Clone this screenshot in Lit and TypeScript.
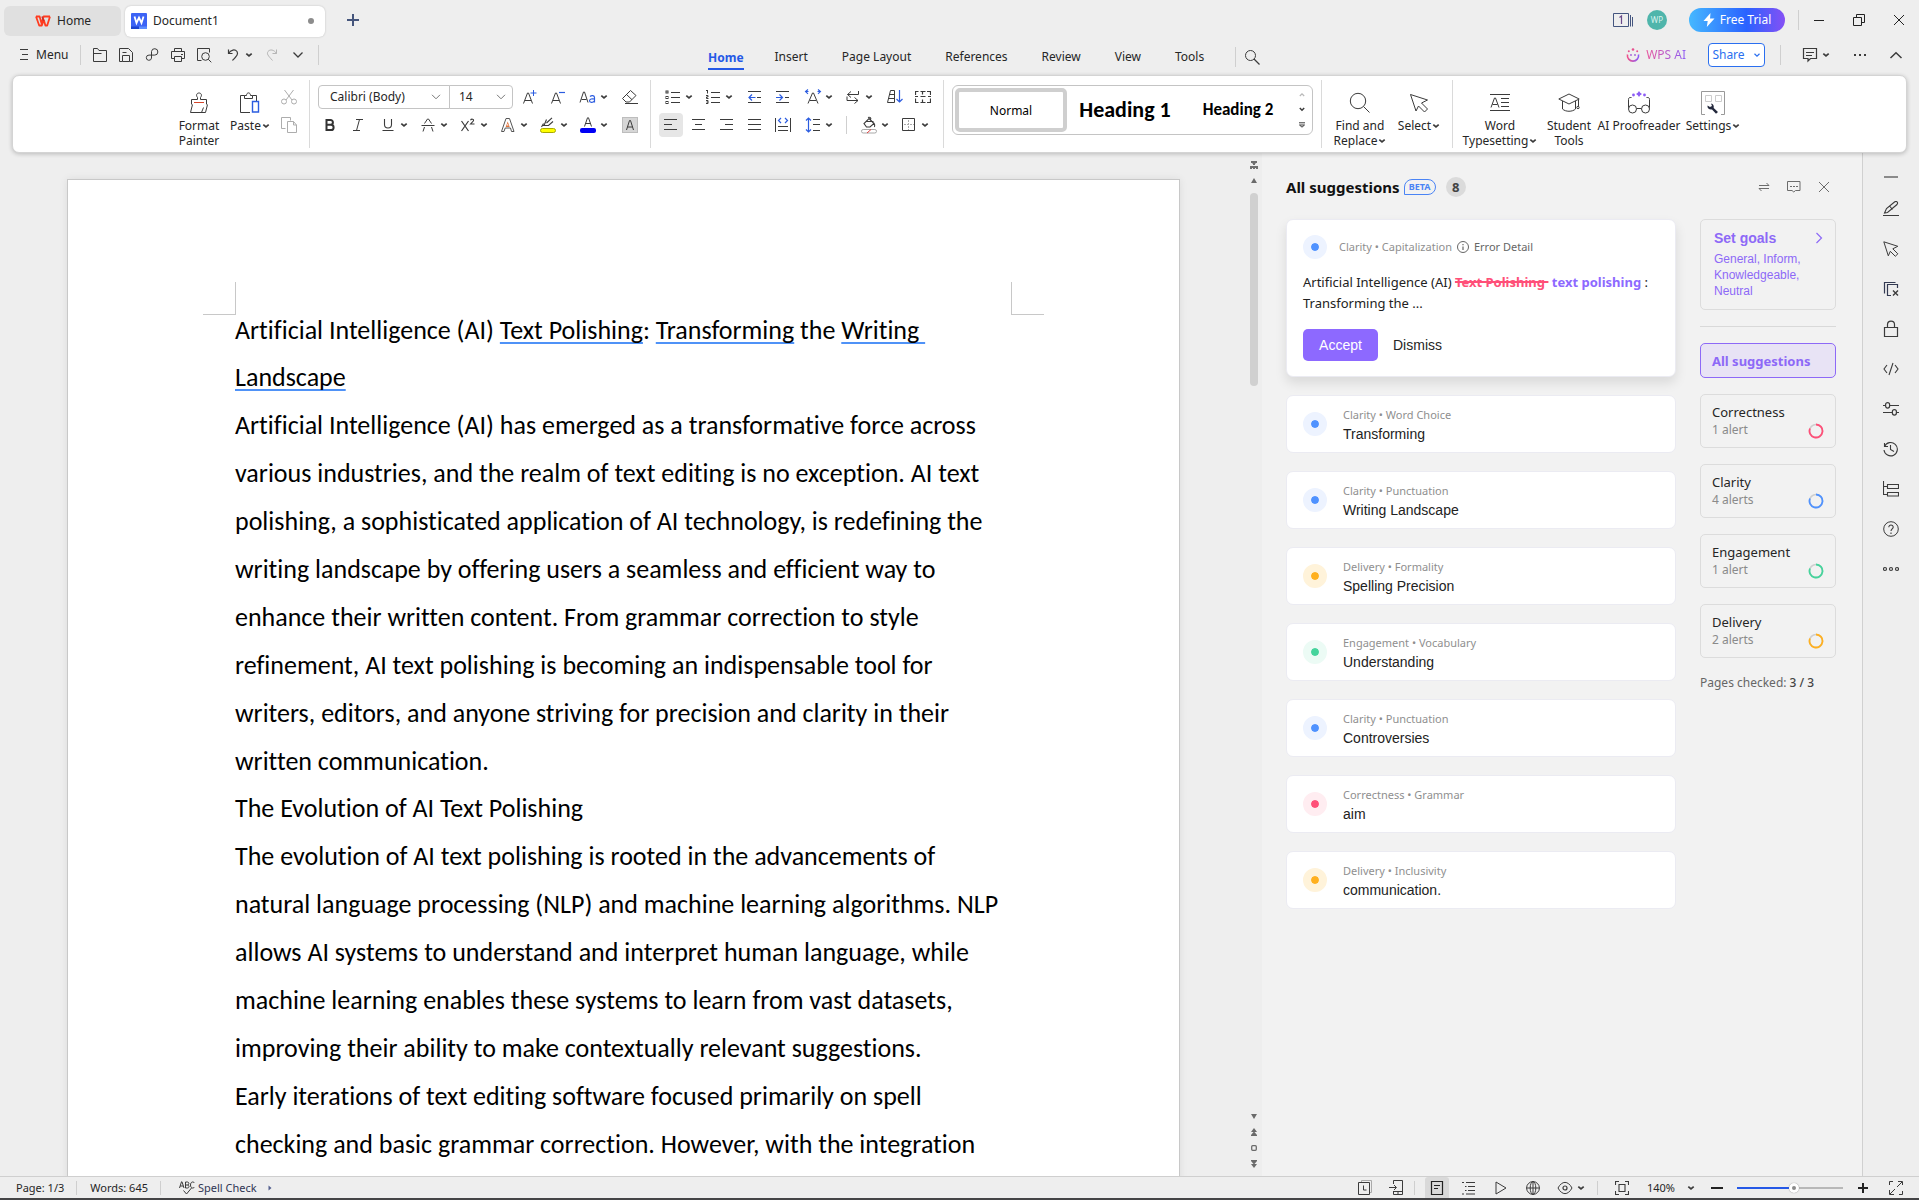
import { LitElement, html, svg, css, nothing, TemplateResult } from "lit";
import { customElement } from "lit/decorators.js";

const K = "#3b3b3b";
const B = "#2b5ce0";

/* Every icon is drawn on its own pixel grid: [width, height, shapes]. */
const ICONS: Record<string, [number, number, TemplateResult]> = {
  wps: [16, 12, svg`<path d="M1 1.500h3.600l2 7 2-7H15M1 1.500l3.200 9h2.600l2-5.500 1.600 5.500h1.800L15 1.500" fill="none" stroke="#ff3b1f" stroke-width="1.800" stroke-linejoin="round"/><path d="M7 1.500l1.800 4.500" stroke="#c9302c" stroke-width="1.500"/>`],
  writer: [16, 16, svg`<rect width="16" height="16" rx="1" fill="#3c63f5"/><path d="M0 13.500h8V16H0z" fill="#1c43cf"/><path d="M8 13.500h8V16H8z" fill="#5c8dff"/><path d="M3.500 3.500l2 6.500L8 4.600l2.500 5.400 2-6.500" fill="none" stroke="#fff" stroke-width="1.800"/>`],
  plus: [14, 14, svg`<path d="M7 1v12M1 7h12" stroke="#45557c" stroke-width="2"/>`],
  menu: [12, 12, svg`<path d="M0 .500h8M2 5.500h6M0 10.500h8" stroke="${K}"/>`],
  open: [16, 16, svg`<path d="M1.500 14.500v-13h4l1.500 2h7.500v11zM1.500 6.500h8" fill="none" stroke="${K}"/>`],
  save: [16, 16, svg`<path d="M4.500 14.500h-3v-13h9l4 4v9h-3M4.500 14.500v-6h7v6zM4.500 5.500h4" fill="none" stroke="${K}"/>`],
  link: [14, 16, svg`<path d="M6.500 9V4.500a3.200 3.200 0 1 1 3.200 3.600H4a2.600 2.600 0 1 0 2.500 3V9" fill="none" stroke="${K}"/>`],
  print: [16, 16, svg`<path d="M4.500 4.500v-3h7v3M4.500 11.500h-3v-7h13v7h-3M4.500 9.500h7v5h-7zM11 7.500h2" fill="none" stroke="${K}"/>`],
  preview: [16, 16, svg`<path d="M5.500 13.500h-4v-12h12v4" fill="none" stroke="${K}"/><circle cx="9.500" cy="9.500" r="3.800" fill="none" stroke="${K}"/><path d="M12.300 12.300l3 3" stroke="${K}"/>`],
  undo: [12, 14, svg`<path d="M1.500 1.500v4h4M1.500 5.500C4 1.500 8 1 10 3.500c1.500 2.500 0 4-4.500 9" fill="none" stroke="${K}" stroke-width="1.200"/>`],
  redo: [12, 14, svg`<path d="M10.500 1.500v4h-4M10.500 5.500C8 1.500 4 1 2 3.500c-1.500 2.500 0 4 4.500 9" fill="none" stroke="#b5b5b5"/>`],
  chev: [8, 6, svg`<path d="M1.300 1.700L4 4l2.700-2.300" fill="none" stroke="${K}" stroke-width="1.700"/>`],
  chevBlue: [8, 6, svg`<path d="M1.500 1.800L4 4.200 6.500 1.800" fill="none" stroke="#2a6ff0" stroke-width="1.200"/>`],
  chevBig: [12, 8, svg`<path d="M1.500 1.500L6 6l4.500-4.500" fill="none" stroke="${K}" stroke-width="1.300"/>`],
  chevUp: [14, 8, svg`<path d="M1.500 7L7 1.800 12.500 7" fill="none" stroke="${K}" stroke-width="1.500"/>`],
  chevThin: [10, 6, svg`<path d="M1 .800L5 4.800 9 .800" fill="none" stroke="#777"/>`],
  search: [16, 16, svg`<circle cx="6.500" cy="6.500" r="5" fill="none" stroke="${K}"/><path d="M10 10l5.500 5.500" stroke="${K}" stroke-width="1.200"/>`],
  wins: [21, 14, svg`<path d="M.500.500h15v13H.500zM17.500 2v11.500M19.500 4v9.500" fill="none" stroke="#44557f"/><path d="M6.500 4.500L8.500 3v8" fill="none" stroke="#6a4a8a" stroke-width="1.200"/>`],
  bolt: [12, 14, svg`<path d="M7.500 0L.500 8h4.200L3.800 14 11.500 5.500H7z" fill="#fff"/>`],
  min: [10, 10, svg`<path d="M0 5.500h10" stroke="#222"/>`],
  restore: [12, 12, svg`<path d="M.500 3.500h8v8h-8zM3.500 3.500v-3h8v8h-3" fill="none" stroke="#222"/>`],
  close: [12, 12, svg`<path d="M1 1l10 10M11 1L1 11" stroke="#222"/>`],
  ai: [14, 14, svg`<defs><linearGradient id="ag" x1="0" x2="1"><stop offset="0" stop-color="#f0508a"/><stop offset="1" stop-color="#8c5cf5"/></linearGradient></defs><path d="M1.500 6.500a5.600 5.600 0 1 0 11 0" fill="none" stroke="url(#ag)" stroke-width="1.600"/><g fill="#e8508f"><circle cx="7" cy="1.500" r="1.300"/><circle cx="2.800" cy="3.200" r="1"/><circle cx="11.200" cy="3.200" r="1"/></g><g fill="#a25ad8"><circle cx="5" cy="7" r=".9"/><circle cx="9" cy="7" r=".9"/></g>`],
  comment: [16, 16, svg`<path d="M1.500 1.500h13v10h-6l-2.500 2.500v-2.500H1.500zM4 5.500h8M4 8.500h6" fill="none" stroke="${K}" stroke-width="1.200"/>`],
  dots: [14, 4, svg`<g fill="${K}"><rect x="1" y="1" width="2" height="2"/><rect x="6" y="1" width="2" height="2"/><rect x="11" y="1" width="2" height="2"/></g>`],
  painter: [20, 22, svg`<path d="M2.500 12.500v-5h6V5.500C6.500 3 8 1 10 1s3.500 2 1.500 4.500v2h6v5M3.500 12.500l-2 8h15l2-8M12.500 20.500l2-5" fill="none" stroke="${K}"/><path d="M5 10.500h10" stroke="#d4462c"/>`],
  paste: [20, 22, svg`<path d="M10 20.500H.500v-17h4M12.500 3.500h4V9M4.500 6.500v-3h2c0-3.500 4-3.500 4 0h2v3z" fill="none" stroke="${K}"/><path d="M12.500 9.500h6v10.500h-6z" fill="#fff" stroke="${B}" stroke-width="1.400"/>`],
  cut: [16, 16, svg`<g fill="none" stroke="#adadad"><path d="M3.500 1l7.500 10M12.500 1L5 11"/><circle cx="3" cy="12.500" r="2.500"/><circle cx="13" cy="12.500" r="2.500"/></g>`],
  copy: [16, 16, svg`<path d="M4.500 11.500h-4v-11h9v3M6.500 4.500h6l3 3.500v7.500h-9zM12.500 4.500V8h3" fill="none" stroke="#adadad"/>`],
  aPlus: [16, 16, svg`<path d="M1.500 14.500l4-10.500h1l4 10.500M3 11.500h6" fill="none" stroke="${K}"/><path d="M11.500 1v6M8.500 4h6" stroke="${B}"/>`],
  aMinus: [16, 16, svg`<path d="M1.500 14.500l4-10.500h1l4 10.500M3 11.500h6" fill="none" stroke="${K}"/><path d="M9 3.500h6" stroke="${B}" stroke-width="1.200"/>`],
  aCase: [18, 16, svg`<path d="M1 13.500L4.500 3h1L9 13.500M2.500 10.500h5" fill="none" stroke="${K}"/><path d="M11 7.500c1.500-1.300 4.500-1.200 4.500 1v5M15.500 10c-2.500-.5-5 0-5 1.800s3.500 2.400 5 0" fill="none" stroke="${B}" stroke-width="1.200"/>`],
  eraser: [18, 16, svg`<path d="M9.500 1.500l5.500 5-6.500 6.500H5L1.500 9.500zM5.500 5.500l5.500 5.200M4 14.500h13" fill="none" stroke="${K}"/>`],
  bold: [12, 14, svg`<path d="M2.500 2h4a2.400 2.400 0 0 1 0 4.800h-4zM2.500 6.800h4.500a2.600 2.600 0 0 1 0 5.200h-4.500z" fill="none" stroke="#333" stroke-width="2"/>`],
  italic: [12, 14, svg`<path d="M4 1.500h7M1 12.500h7M7.500 1.500l-3 11" fill="none" stroke="${K}"/>`],
  under: [12, 14, svg`<path d="M2.500 1v5.500a3.500 3.500 0 0 0 7 0V1M.500 12.500h11" fill="none" stroke="${K}" stroke-width="1.100"/>`],
  strike: [14, 14, svg`<path d="M3.500 5.500l3-4.500h1l3 4.500M3.500 9l-1.500 4.500M10.500 9l1.500 4.500M.500 7.500h13" fill="none" stroke="${K}"/>`],
  sup: [16, 14, svg`<path d="M1.500 3l7 10M8.500 3l-7 10" fill="none" stroke="${K}" stroke-width="1.200"/><path d="M10.500 2.200c.8-1.600 3.500-1.300 3 .5-.2.800-2 2-3 3.300h4" fill="none" stroke="${K}" stroke-width="1.100"/>`],
  outl: [16, 16, svg`<path d="M1.500 14.500L6 1.500h3.500l4.500 13h-2.500l-1-3.500H5.200l-1.200 3.500z" fill="#fff" stroke="#555"/><path d="M7.700 4.500l2 5.500h-4z" fill="#e0733d"/><path d="M7.700 6.500l.8 2h-1.600z" fill="#fff"/>`],
  hilite: [18, 16, svg`<path d="M13 .800L7.500 6M3.500 8.500h6l4.500-4M7.500 2.500L5 8.500M4.500 6.500l-2 3.500" fill="none" stroke="${K}" stroke-width="1.100"/><rect x="1.500" y="11.500" width="15" height="4" rx="2" fill="#ff0" stroke="#a9a900"/>`],
  fcolor: [18, 16, svg`<path d="M5.500 9.500L8.500.800h1l3 8.700M6.500 6.500h5" fill="none" stroke="${K}"/><rect x="1" y="11" width="16" height="5" rx="2" fill="#0000f5"/>`],
  abox: [16, 16, svg`<rect x=".5" y=".5" width="15" height="15" fill="#d6d6d6" stroke="#bdbdbd"/><path d="M4.500 13L7.500 3.500h1L11.500 13M5.500 10h5" fill="none" stroke="${K}"/>`],
  bullets: [16, 14, svg`<path d="M6 2.500h9M6 7.500h9M6 12.500h9" stroke="${K}"/><g fill="none" stroke="${K}"><rect x="1" y="1" width="2" height="2"/><rect x="1" y="6.500" width="2" height="2"/><rect x="1" y="11.500" width="2" height="2"/></g>`],
  numbers: [16, 14, svg`<path d="M6 2.500h9M6 7.500h9M6 12.500h9M2.500 0v3.500M1 .500h1.500M1 5.500h2v1.500H1.500V8.500H3.500M1 10.500h2v3H1M1.500 12h1.500" fill="none" stroke="${K}"/>`],
  outdent: [14, 14, svg`<path d="M0 1.500h13M0 12.500h13M9 7.500h4" stroke="${K}"/><path d="M1 7.500h6.500M4 4.500l-3 3 3 3" fill="none" stroke="${B}" stroke-width="1.200"/>`],
  indent: [14, 14, svg`<path d="M0 1.500h13M0 12.500h13M9 7.500h4" stroke="${K}"/><path d="M0 7.500h6.500M3.500 4.500l3 3-3 3" fill="none" stroke="${B}" stroke-width="1.200"/>`],
  spread: [18, 16, svg`<path d="M4 14.500L8.500 4h1L14 14.500M6 11.500h6" fill="none" stroke="${K}"/><path d="M4.500 2.500H1.500M4 .500L1.500 2.500 4 4.800M13.500 2.500h3M14 .500l2.500 2L14 4.800" fill="none" stroke="${B}" stroke-width="1.100"/>`],
  ltr: [14, 14, svg`<path d="M12.500 1v3.500H1.500M5 1.500l-3.500 3L5 7.500M1 6.500v4h11M8.500 7.500l3.500 3-3.500 3" fill="none" stroke="${K}"/>`],
  sort: [18, 16, svg`<path d="M1.500 13.500L4.500 1.500h4v12zM3.500 5.500h5M2.500 9.500h6" fill="none" stroke="${K}"/><path d="M13.500 1v12M10.500 10l3 3 3-3" fill="none" stroke="${B}" stroke-width="1.200"/>`],
  cells: [16, 14, svg`<path d="M.500 5V1.500h3M5.500 1.500h5M12 1.500h3.500V5M.500 8.500v4h3M5.500 12.500h5M12 12.500h3.500v-4M7.500 2v2.500M7.500 9.500V12M0 6.500h3M5.500 6.500h5M13 6.500h3" fill="none" stroke="${K}" stroke-width="1.200"/>`],
  al: [14, 14, svg`<path d="M0 1.500h13M0 6.500h8M0 11.500h13" stroke="${K}"/>`],
  ac: [14, 14, svg`<path d="M0 1.500h13M3 6.500h7M0 11.500h13" stroke="${K}"/>`],
  ar: [14, 14, svg`<path d="M0 1.500h13M5 6.500h8M0 11.500h13" stroke="${K}"/>`],
  aj: [14, 14, svg`<path d="M0 1.500h13M0 6.500h13M0 11.500h13" stroke="${K}"/>`],
  dist: [16, 16, svg`<path d="M.500 1v14M15.500 1v14M3 9.500h10M3 13.500h10" stroke="${K}"/><path d="M6 1L3.500 3.500 6 6M10 1l2.500 2.500L10 6" fill="none" stroke="${B}" stroke-width="1.200"/>`],
  spacing: [16, 16, svg`<path d="M8 2.500h7M8 7.500h7M8 13.500h7" stroke="${K}"/><path d="M3.500 1v14M1 3.500L3.500 1 6 3.500M1 12.500L3.500 15 6 12.500" fill="none" stroke="${B}" stroke-width="1.200"/>`],
  fill: [18, 18, svg`<path d="M8 1.500c2-.8 3.500.5 2.500 2M5.500 5.500h8M9 2.500l5 5-4 3.500H6.500L4 7.500zM14 7c1 2 1 3 .5 4" fill="none" stroke="${K}" stroke-width="1.100"/><rect x="1.500" y="13.500" width="15" height="3.500" rx="1.700" fill="#fff" stroke="#a8a8a8"/><path d="M7 17l4-3.500" stroke="#e04040"/>`],
  border: [14, 14, svg`<path d="M.500.500h12v12H.500z" fill="none" stroke="${K}"/><path d="M6.500 2v10M2 6.500h10" stroke="#aaa" stroke-dasharray="2 1"/>`],
  gUp: [6, 5, svg`<path d="M.800 4L3 1.800 5.200 4" fill="none" stroke="#b8b8b8" stroke-width="1.200"/>`],
  gDown: [6, 5, svg`<path d="M.800 1L3 3.200 5.200 1" fill="none" stroke="${K}" stroke-width="1.500"/>`],
  gMore: [8, 6, svg`<path d="M1 .800h6M1.500 3h5L4 5.200z" fill="none" stroke="${K}"/>`],
  find: [22, 22, svg`<circle cx="9" cy="9" r="7.700" fill="none" stroke="${K}"/><path d="M14.500 14.500l6 6" stroke="${K}"/>`],
  select: [20, 20, svg`<path d="M1.500 1.500l17 5.500-6 3 6 6-3 3-6-6-2.500 5z" fill="none" stroke="${K}" stroke-linejoin="round"/>`],
  typeset: [20, 18, svg`<path d="M0 .500h20M0 16.500h20M11 4.500h8M11 8.500h8M11 12.500h8M1 13.500L4.500 4h1L9 13.500M2.500 10.500h5" fill="none" stroke="${K}"/>`],
  student: [22, 20, svg`<path d="M.800 6L11 1l10.200 5L11 11zM4.500 8v8c3 3 10 3 13 0V8M20.500 6.500v7" fill="none" stroke="${K}"/><circle cx="20" cy="14.500" r="1.200" fill="#fff" stroke="${K}"/>`],
  proof: [24, 24, svg`<path d="M4.500 6.500c-2 0-3 0-3 2v9M19.500 6.500c2 0 3 0 3 2v9M10 17.500h4" fill="none" stroke="${K}"/><circle cx="5.500" cy="18" r="4" fill="#fff" stroke="${K}"/><circle cx="18.500" cy="18" r="4" fill="#fff" stroke="${K}"/><g fill="#8c5cf5"><path d="M12 0l1.200 1.800L15 3l-1.800 1.200L12 6l-1.200-1.800L9 3l1.800-1.200z"/><circle cx="6.500" cy="4" r="1.400"/><circle cx="17.500" cy="4" r="1.400"/></g>`],
  settings: [24, 24, svg`<path d="M4 23.500H.500V.500h23v23H20" fill="none" stroke="#999"/><path d="M4.500 4.500h6v6h-6zM14.500 4.500h6v6h-6z" fill="none" stroke="#ccc"/><path d="M10 12.500l1 2.500-2 1-2.500-1.500c-.5 3 2 4.500 4.500 4l4 4.200 2-1.800-4.300-4c.5-2-.5-4-2.700-4.400z" fill="#23283c"/>`],
  swap: [12, 10, svg`<path d="M1 3.500h10L8.500 1M11 6.500H1L3.500 9" fill="none" stroke="#6c6c6c"/>`],
  feed: [14, 12, svg`<path d="M.500.500h12.500v9H8.500L6.800 11 5 9.500H.500z" fill="none" stroke="#6c6c6c"/><path d="M3 5.500h8" stroke="#6c6c6c" stroke-dasharray="2 1"/>`],
  xs: [12, 12, svg`<path d="M1 1l10 10M11 1L1 11" stroke="#6c6c6c"/>`],
  info: [12, 12, svg`<circle cx="6" cy="6" r="5.500" fill="none" stroke="#666"/><path d="M6 3v1.200M6 5.500V9" stroke="#666" stroke-width="1.200"/>`],
  right: [8, 12, svg`<path d="M1.500 1L6.500 6l-5 5" fill="none" stroke="#8d69f7" stroke-width="1.200"/>`],
  dash: [16, 4, svg`<path d="M1 2h14" stroke="#8a8a8a" stroke-width="2"/>`],
  pen: [16, 16, svg`<path d="M4.500 11.500l-3 .5 2-4.500 8-6.500c2-1.500 4 .5 2.500 2.500zM7 5.500l2.500 3M0 14.500h16" fill="none" stroke="${K}" stroke-width="1.100"/>`],
  cursor: [16, 16, svg`<path d="M.800.800l14 4.500-5 2.500 5 5-2.500 2.500-5-5-2 4.500z" fill="none" stroke="${K}"/>`],
  layers: [16, 16, svg`<path d="M1.500 12.500V1.500h11M8 14.500H4.500v-11h10V7" fill="none" stroke="#333a52" stroke-width="1.200"/><path d="M10 9.500l5 5M15 9.500l-5 5" stroke="${K}" stroke-width="1.400"/>`],
  lock: [16, 18, svg`<path d="M1.500 7.500h13v9h-13zM4.500 7.500V4.500c0-4.500 7-4.500 7 0v3" fill="none" stroke="${K}" stroke-width="1.200"/>`],
  code: [16, 14, svg`<path d="M4 3L1 7l3 4M12 3l3 4-3 4M10 1L6 13" fill="none" stroke="${K}" stroke-width="1.100"/>`],
  sliders: [16, 14, svg`<path d="M0 3.500h2.500M7 3.500h9M0 10.500h9M14 10.500h2" stroke="${K}"/><g fill="none" stroke="${K}" stroke-width="1.200"><rect x="2.600" y=".6" width="4" height="5.500" rx="2"/><rect x="9.400" y="7.600" width="4" height="5.500" rx="2"/></g>`],
  history: [16, 16, svg`<path d="M1.500 2v3.500H5M1.500 5.500A6.700 6.700 0 1 1 1 9M7.500 4v4.500l3.500 2" fill="none" stroke="${K}" stroke-width="1.100"/>`],
  tree: [16, 16, svg`<path d="M.500 0v13.500H4M.500 5.500H4M4.500 3.500h11v4h-11zM4.500 11.500h11v3.500h-11z" fill="none" stroke="${K}" stroke-width="1.100"/>`],
  help: [16, 16, svg`<circle cx="8" cy="8" r="7.300" fill="none" stroke="${K}"/><path d="M5.800 6.200c0-3 4.500-2.700 4.400 0C10.100 7.800 8 8 8 10M8 11.500V13" fill="none" stroke="${K}" stroke-width="1.100"/>`],
  more: [16, 6, svg`<g fill="none" stroke="${K}" stroke-width="1.200"><circle cx="2" cy="3" r="1.500"/><circle cx="8" cy="3" r="1.500"/><circle cx="14" cy="3" r="1.500"/></g>`],
  splitV: [8, 8, svg`<path d="M1 0h6v2H6L5 3v1H3V3L2 2H1zM0 5h8v3H6V7H5v1H3V7H2v1H0z" fill="#707070"/>`],
  tUp: [6, 5, svg`<path d="M3 0l3 5H0z" fill="#6a6a6a"/>`],
  tDown: [6, 5, svg`<path d="M3 5L0 0h6z" fill="#6a6a6a"/>`],
  tUp2: [6, 8, svg`<path d="M3 0l3 4H0zM3 3.500L6 7v1H0V7z" fill="#6a6a6a"/>`],
  tDown2: [6, 8, svg`<path d="M3 8l3-4H0zM3 4.500L6 1V0H0v1z" fill="#6a6a6a"/>`],
  tBox: [6, 6, svg`<rect x=".7" y=".7" width="4.600" height="4.600" rx="1" fill="none" stroke="#6a6a6a" stroke-width="1.300"/>`],
  abc: [16, 14, svg`<path d="M.500 7L2.500.800h.5L5 7M1.200 5h3M6.500 1v6h2c2 0 2-3 0-3h-2M6.500 1h2c1.800 0 1.800 3 0 3M15.500 2c-1.500-2-4-1-4 2s2.500 4 4 2M4.500 9.500l3 3.500 5-6" fill="none" stroke="${K}"/>`],
  tri: [4, 6, svg`<path d="M.500.500L3.500 3 .500 5.500z" fill="#55608f"/>`],
  sHist: [14, 15, svg`<path d="M3.500 2.500v-2h10v12h-2" fill="none" stroke="#aaa"/><path d="M.500 2.500h11v12H.500zM5.500 5.500v4.500h3" fill="none" stroke="${K}"/>`],
  sPhone: [15, 15, svg`<path d="M4.500 4V.500h9v14h-9V11M4.500 11.500h9M0 7.500h7M5 5l2.500 2.500L5 10M8 13h2" fill="none" stroke="${K}"/>`],
  sPage: [14, 14, svg`<path d="M1.500.500h11v13h-11zM4 4.500h6M4 7.500h4" fill="none" stroke="#222" stroke-width="1.200"/>`],
  sList: [14, 14, svg`<path d="M0 1.500h2M4 1.500h9M3 5.500h1.500M6 5.500h7M3 9.500h1.500M6 9.500h7M0 13h2M4 13h9" stroke="${K}"/>`],
  sPlay: [12, 14, svg`<path d="M1 1l10 6-10 6z" fill="none" stroke="${K}"/>`],
  sGlobe: [14, 14, svg`<g fill="none" stroke="${K}"><circle cx="7" cy="7" r="6.400"/><ellipse cx="7" cy="7" rx="2.800" ry="6.400"/><path d="M.500 7h13M7 .500v13"/></g>`],
  sEye: [16, 14, svg`<path d="M1 7c4-7.500 10-7.500 14 0-4 7.500-10 7.500-14 0z" fill="none" stroke="${K}"/><circle cx="8" cy="7" r="2" fill="none" stroke="${K}" stroke-width="1.200"/>`],
  sFit: [14, 14, svg`<path d="M.500 4V.500H4M10 .500h3.500V4M13.500 10v3.500H10M4 13.500H.500V10M4 3.500h6v7H4z" fill="none" stroke="${K}" stroke-width="1.100"/>`],
  sMinus: [12, 12, svg`<path d="M0 6h12" stroke="#222" stroke-width="2"/>`],
  sPlus: [12, 12, svg`<path d="M1 6h10M6 1v10" stroke="#222" stroke-width="2"/>`],
  sFull: [14, 14, svg`<path d="M.500 4V.500H4M13.500 4V.500M13.500.500H9M.500 9v4.500H5M13.500 10v3.500H10M8 6l5-5M6 8l-5 5" fill="none" stroke="${K}"/>`],
};

const ic = (n: string) => {
  const [w, h, body] = ICONS[n];
  return html`<svg width=${w} height=${h} viewBox="0 0 ${w} ${h}" aria-hidden="true">${body}</svg>`;
};

const tool = (n: string, label: string, on = false) =>
  html`<button class="tool ${on ? "on" : ""}" aria-label=${label}>${ic(n)}</button>`;
const drop = (n: string, label: string) =>
  html`<button class="drop" aria-label=${label}><span class="dropic">${ic(n)}</span>${ic("chev")}</button>`;
const big = (cls: string, n: string, l1: string, l2 = "", chev = false) => html`
  <button class="big ${cls}">
    <span class="bigic">${ic(n)}</span>
    <span class="lab">${l1}${!l2 && chev ? ic("chev") : nothing}</span>
    ${l2 ? html`<span class="lab">${l2}${chev ? ic("chev") : nothing}</span>` : nothing}
  </button>`;
const sep = html`<span class="sep"></span>`;

const BODY: string[][] = [
  [
    "Artificial Intelligence (AI) has emerged as a transformative force across",
    "various industries, and the realm of text editing is no exception. AI text",
    "polishing, a sophisticated application of AI technology, is redefining the",
    "writing landscape by offering users a seamless and efficient way to",
    "enhance their written content. From grammar correction to style",
    "refinement, AI text polishing is becoming an indispensable tool for",
    "writers, editors, and anyone striving for precision and clarity in their",
    "written communication.",
  ],
  ["The Evolution of AI Text Polishing"],
  [
    "The evolution of AI text polishing is rooted in the advancements of",
    "natural language processing (NLP) and machine learning algorithms. NLP",
    "allows AI systems to understand and interpret human language, while",
    "machine learning enables these systems to learn from vast datasets,",
    "improving their ability to make contextually relevant suggestions.",
  ],
  [
    "Early iterations of text editing software focused primarily on spell",
    "checking and basic grammar correction. However, with the integration",
  ],
];

const ITEMS = [
  ["blue", "Clarity", "Word Choice", "Transforming"],
  ["blue", "Clarity", "Punctuation", "Writing Landscape"],
  ["amber", "Delivery", "Formality", "Spelling Precision"],
  ["green", "Engagement", "Vocabulary", "Understanding"],
  ["blue", "Clarity", "Punctuation", "Controversies"],
  ["red", "Correctness", "Grammar", "aim"],
  ["amber", "Delivery", "Inclusivity", "communication."],
];

const CATS = [
  ["Correctness", "1 alert", "#ff4f78"],
  ["Clarity", "4 alerts", "#4f92ff"],
  ["Engagement", "1 alert", "#45d49c"],
  ["Delivery", "2 alerts", "#ffb01f"],
];

const ring = (c: string) => html`<svg width="16" height="16" viewBox="0 0 16 16" aria-hidden="true">
  <circle cx="8" cy="8" r="6.500" fill="none" stroke="#cfcfcf" stroke-width="1.500"/>
  <path d="M8 1.500A6.500 6.500 0 1 1 2 5.500" fill="none" stroke=${c} stroke-width="1.800"/></svg>`;

@customElement("app-root")
export class AppRoot extends LitElement {
  static styles = css`
    :host {
      display: grid;
      grid-template-rows: auto auto auto minmax(0, 1fr) auto;
      height: 100vh;
      overflow: hidden;
      background: #eeeeee;
      color: #262626;
      font: 12px/16px "Noto Sans", "Open Sans", sans-serif;
    }
    * { box-sizing: border-box; }
    svg { display: block; flex: none; }
    button, select, input { font: inherit; color: inherit; margin: 0; }
    button { border: 0; padding: 0; background: none; display: flex; align-items: center; justify-content: center; flex: none; white-space: nowrap; }
    h1, h2, p, ul { margin: 0; padding: 0; }

    .titlebar { display: flex; align-items: center; height: 40px; padding: 0 0 0 4px; }
    .tab { display: flex; align-items: center; justify-content: flex-start; height: 31px; margin-top: 2px; border-radius: 6px; }
    .hometab { width: 117px; height: 30px; background: #e0e0e0; gap: 6px; padding-left: 31px; }
    .doctab { width: 200px; margin-left: 4px; background: #fff; box-shadow: 0 0 2px #bbb; gap: 6px; padding: 0 11px 0 6px; }
    .doctab .name { flex: 1; text-align: left; }
    .dirty { width: 6px; height: 6px; border-radius: 50%; background: #8c8c8c; }
    .new { width: 28px; height: 28px; margin-left: 14px; }
    .push { flex: 1; }
    .avatar { width: 20px; height: 20px; border-radius: 50%; background: #4fb5ab; color: #d8f3ee; font-size: 8px; margin: 0 22px 0 13px; }
    .trial { width: 96px; height: 24px; border-radius: 12px; color: #fff; gap: 5px; background: linear-gradient(90deg, #45b8ff, #2a62ff 60%, #8550f5); }
    .vline { width: 1px; height: 20px; background: #cfcfcf; flex: none; }
    .win { width: 40px; height: 30px; }
    .wins { display: flex; margin-left: 13px; align-items: center; }

    .menubar { display: grid; grid-template-columns: 700fr 568fr 651fr; height: 35px; align-items: start; }
    .quick { display: flex; align-items: center; height: 30px; padding-left: 20px; }
    .menu { gap: 4px; margin-right: 12px; }
    .quick .tool { width: 26px; }
    .quick .first { margin-left: 6px; display: flex; }
    .quick .drop { width: 42px; }
    .quick .end { margin-left: 7px; }
    .tabs { display: flex; align-items: center; height: 34px; }
    .tabs a { color: inherit; text-decoration: none; padding: 0 17px; white-space: nowrap; }
    .tabs a.cur { color: #2458e6; font-weight: 700; padding: 0 8px; margin-right: 6px; }
    .tabs a.cur span { display: block; padding-top: 2px; border-bottom: 2px solid #2458e6; line-height: 21px; }
    .tabs .vline { margin: 0 2px 0 14px; }
    .right { display: flex; align-items: center; justify-content: flex-end; height: 30px; padding-right: 5px; }
    .ai { gap: 6px; color: #b05bd6; }
    .ai span { background: linear-gradient(90deg, #e8539c, #8c5cf5); background-clip: text; color: transparent; }
    .share { width: 57px; height: 24px; border: 1px solid #2a6ff0; border-radius: 4px; background: #fff; color: #2a6ff0; gap: 8px; margin: 0 15px 0 22px; }
    .right .drop { margin-left: 13px; }
    .right .tool { width: 36px; }

    .ribbon { display: flex; height: 78px; margin: 0 12px; padding: 0 0 0 160px; border: 1px solid #d4d4d4; border-radius: 7px; background: #fff; box-shadow: 0 1px 4px rgba(0,0,0,.22); z-index: 2; }
    .sep { width: 1px; background: #dadada; margin: 4px 6px; flex: none; }
    .rows { padding-top: 7px; display: flex; flex-direction: column; flex: none; }
    .row { display: flex; align-items: center; height: 28px; }
    .tool { width: 28px; height: 24px; border-radius: 4px; }
    .tool.on { background: #e6e6e6; width: 24px; margin: 0 2px; }
    .drop { width: 40px; height: 24px; padding: 0 4px; justify-content: flex-start; }
    .dropic { width: 24px; display: flex; justify-content: center; }
    .s4 { width: 4px; flex: none; }
    .s8 { width: 8px; flex: none; }
    .big { flex-direction: column; justify-content: flex-start; padding-top: 12px; line-height: 15px; }
    .bigic { height: 30px; display: flex; align-items: center; }
    .lab { display: flex; align-items: center; gap: 1px; }
    .w50 { width: 50px; } .w52 { width: 52px; } .w54 { width: 54px; } .w64 { width: 64px; } .w82 { width: 82px; } .w56 { width: 56px; } .w84 { width: 84px; }
    .combo { display: flex; align-items: center; height: 24px; border: 1px solid #c4c4c4; background: #fff; padding-right: 8px; }
    .combo select { appearance: none; border: 0; background: none; outline: 0; flex: 1; min-width: 0; padding: 0 0 0 11px; }
    .face { width: 132px; margin-left: 2px; border-radius: 4px 0 0 4px; }
    .size { width: 64px; margin: 0 3px 0 -1px; border-radius: 0 4px 4px 0; padding-right: 6px; }
    .size select { padding-left: 9px; }
    .short { height: 18px; align-self: center; margin: 0 6px 0 9px; }
    .gallery { display: flex; align-items: center; width: 361px; height: 50px; margin: 9px 2px 0; border: 1px solid #c4c4c4; border-radius: 6px; padding: 0 5px 0 2px; color: #000; font-family: Carlito, Lato, sans-serif; }
    .gallery .style { width: 112px; height: 44px; }
    .gallery .picked { border: 4px solid #cfcfcf; border-radius: 5px; font: 12px "Noto Sans", sans-serif; }
    .gallery .g1 { font-size: 22px; font-weight: 700; padding-left: 4px; }
    .gallery .g2 { font-size: 17px; font-weight: 700; padding-left: 6px; }
    .scrolls { display: flex; flex-direction: column; align-items: center; gap: 10px; flex: 1; padding-left: 6px; }

    .work { display: flex; min-height: 0; }
    .canvas { flex: 1; min-width: 0; overflow: hidden; padding: 26px 66px 0 67px; }
    .page { height: 1400px; background: #fff; border: 1px solid #c8c8c8; box-shadow: 0 0 8px rgba(0,0,0,.08); padding: 102px 135px 0; }
    .marks { display: flex; justify-content: space-between; }
    .mark { width: 33px; height: 33px; border: solid #c8c8c8; border-width: 0 1px 1px 0; }
    .mark.r { border-width: 0 0 1px 1px; }
    .text { margin: -8px 0 0 32px; color: #000; font: 26px/48px Carlito, Lato, sans-serif; font-variant-ligatures: none; white-space: nowrap; }
    .text h1 { font: inherit; line-height: 47px; font-variant-ligatures: none; }
    .text .heading { line-height: 47px; }
    .text span { display: block; }
    .text u { text-decoration: underline 2px #4f92f7; text-underline-offset: 3px; text-decoration-skip-ink: none; }

    .vscroll { width: 16px; display: flex; flex-direction: column; align-items: center; padding: 8px 0 8px; flex: none; }
    .thumb { width: 8px; height: 193px; margin: 10px 0 auto; border-radius: 4px; background: #d0d0d0; }
    .vscroll .up { margin-top: 9px; }
    .pager { display: flex; flex-direction: column; align-items: center; gap: 9px; }

    .panel { width: 600px; flex: none; background: #f2f2f2; padding: 23px 26px 0 24px; overflow: hidden; }
    .phead { display: flex; align-items: center; height: 22px; }
    .phead h2 { font-size: 15px; font-weight: 700; color: #111; line-height: 22px; white-space: nowrap; }
    .beta { width: 32px; height: 16px; margin: 0 10px 0 4px; border: 1px solid #4a84f5; border-radius: 8px 8px 8px 0; color: #4a84f5; font-size: 9px; line-height: 14px; font-weight: 700; text-align: center; }
    .count { width: 20px; height: 20px; border-radius: 50%; background: #dbdbdb; font-size: 13px; font-weight: 700; line-height: 20px; text-align: center; color: #444; }
    .pacts { display: flex; gap: 2px; margin-right: -2px; }
    .cols { display: flex; gap: 24px; margin-top: 21px; }
    .list { flex: 1; display: flex; flex-direction: column; gap: 18px; min-width: 0; list-style: none; }
    .card { border: 1px solid #ebebf2; border-radius: 7px; background: #fff; }
    .item { display: flex; align-items: center; justify-content: flex-start; width: 100%; height: 58px; padding: 0 16px; gap: 16px; text-align: left; }
    .item .cat { line-height: 18px; padding-top: 1px; }
    .item b, .cat { display: block; font-weight: 400; }
    .item b { font: 14px/20px "Liberation Sans", sans-serif; color: #222; }
    .cat { color: #8f8f8f; font-size: 11px; }
    .dot { width: 24px; height: 24px; border-radius: 50%; border: 8px solid; flex: none; background-clip: padding-box; }
    .blue { background-color: #4f92ff; border-color: #edf3ff; }
    .amber { background-color: #ffb01f; border-color: #fff3da; }
    .green { background-color: #45d49c; border-color: #ecfbf5; }
    .red { background-color: #ff4f78; border-color: #ffedf1; }
    .main { height: 158px; padding: 15px 16px 0; box-shadow: 0 6px 12px rgba(0,0,0,.1); }
    .mhead { display: flex; align-items: center; height: 24px; }
    .mhead .cat { margin: 0 5px 0 12px; }
    .detail { gap: 5px; color: #666; font-size: 11px; }
    .snip { margin-top: 13px; font-size: 13px; line-height: 21px; white-space: nowrap; color: #222; }
    .snip del { color: #ff4f78; font-weight: 700; text-decoration-thickness: 2px; }
    .snip ins { color: #8d69ff; font-weight: 700; text-decoration: none; }
    .acts { display: flex; margin-top: 15px; gap: 15px; font: 14px "Liberation Sans", sans-serif; }
    .accept { width: 75px; height: 32px; border-radius: 5px; background: #8d69ff; color: #fff; }
    .side { width: 136px; flex: none; display: flex; flex-direction: column; }
    .goals { display: block; height: 91px; padding: 7px 12px 9px 13px; border: 1px solid #dcdcdc; border-radius: 5px; text-align: left; color: #8d69f7; font: 12px/16px "Liberation Sans", sans-serif; white-space: normal; }
    .goals .gh { display: flex; justify-content: space-between; align-items: center; font-size: 14px; line-height: 18px; font-weight: 700; margin-bottom: 4px; }
    .rule { height: 1px; background: #d9d9d9; margin: 16px 0; }
    .all { height: 35px; border: 1px solid #8d69f7; border-radius: 5px; background: #e8e3f5; color: #8d69f7; font-size: 13px; font-weight: 700; justify-content: flex-start; padding-left: 11px; }
    .catbtn { height: 54px; margin-top: 16px; border: 1px solid #dcdcdc; border-radius: 5px; justify-content: space-between; align-items: flex-end; text-align: left; padding: 0 11px 8px; font-size: 13px; line-height: 18px; }
    .catbtn small { display: block; color: #8a8a8a; font: 12px/18px "Noto Sans", sans-serif; }
    .checked { margin-top: 17px; color: #666; white-space: nowrap; }
    .checked b { font-weight: 500; color: #444; }

    .dock { width: 57px; flex: none; border-left: 1px solid #d0d0d0; display: flex; flex-direction: column; align-items: center; padding-top: 16px; }
    .dock .tool { height: 40px; }
    .dock .tool:first-child { height: 16px; margin-bottom: 4px; }

    .status { display: flex; align-items: center; height: 24px; border-top: 1px solid #cfcfcf; border-bottom: 2px solid #444446; padding: 0 9px 0 16px; white-space: nowrap; font-size: 11px; }
    .status .vline { height: 14px; margin: 0 13px 0 12px; }
    .spell { gap: 3px; color: #2f3553; margin-left: 5px; }
    .spell .arrow { margin-left: 8px; }
    .view { width: 32px; height: 21px; }
    .view.on { background: #d9d9d9; width: 24px; margin: 0 4px; border-radius: 3px 3px 0 0; }
    .status .drop { width: 40px; }
    .status .tight { margin: 0 6px 0 1px; }
    .status .wide { margin: 0 12px 0 8px; }
    .vgap { width: 13px; }
    .zoomv { gap: 12px; margin-right: 10px; }
    .range { appearance: none; width: 106px; height: 12px; margin: 0 8px; background: linear-gradient(90deg, #2458e6 54%, #b8b8b8 54%) center/100% 2px no-repeat; }
    .range::-webkit-slider-thumb { appearance: none; width: 10px; height: 10px; border-radius: 50%; border: 3px solid #fff; background: #8a8a8a; box-shadow: 0 0 1px #777; }
    .full { width: 28px; height: 20px; margin-left: 7px; }
    .zb { width: 24px; height: 20px; }
  `;

  render() {
    return html`
      <header class="titlebar">
        <button class="tab hometab">${ic("wps")}Home</button>
        <button class="tab doctab">${ic("writer")}<span class="name">Document1</span><span class="dirty"></span></button>
        <button class="new" aria-label="New tab">${ic("plus")}</button>
        <span class="push"></span>
        <button aria-label="Windows">${ic("wins")}</button>
        <button class="avatar">WP</button>
        <button class="trial">${ic("bolt")}Free Trial</button>
        <div class="wins">
          <span class="vline"></span>
          <button class="win" aria-label="Minimize">${ic("min")}</button>
          <button class="win" aria-label="Restore">${ic("restore")}</button>
          <button class="win" aria-label="Close">${ic("close")}</button>
        </div>
      </header>

      <nav class="menubar">
        <div class="quick">
          <button class="menu">${ic("menu")}Menu</button>
          <span class="vline"></span>
          <span class="first">
            ${tool("open", "Open")}${tool("save", "Save")}${tool("link", "Export")}${tool("print", "Print")}${tool("preview", "Print preview")}
          </span>
          ${drop("undo", "Undo")}${tool("redo", "Redo")}${tool("chevBig", "More commands")}
          <span class="vline end"></span>
        </div>
        <div class="tabs">
          <a class="cur" href="#home"><span>Home</span></a>
          ${["Insert", "Page Layout", "References", "Review", "View", "Tools"].map((t) => html`<a href="#tab">${t}</a>`)}
          <span class="vline"></span>
          ${tool("search", "Search")}
        </div>
        <div class="right">
          <button class="ai">${ic("ai")}<span>WPS AI</span></button>
          <button class="share">Share${ic("chevBlue")}</button>
          <span class="vline"></span>
          ${drop("comment", "Comments")}
          <span class="s8"></span>
          ${tool("dots", "More")}${tool("chevUp", "Collapse ribbon")}
        </div>
      </nav>

      <section class="ribbon">
        ${big("w52", "painter", "Format", "Painter")}
        ${big("w50", "paste", "Paste", "", true)}
        <div class="rows">
          <div class="row">${tool("cut", "Cut")}</div>
          <div class="row">${tool("copy", "Copy")}</div>
        </div>
        ${sep}
        <div class="rows">
          <div class="row">
            <label class="combo face"><select aria-label="Font"><option>Calibri (Body)</option></select>${ic("chevThin")}</label>
            <label class="combo size"><select aria-label="Font size"><option>14</option></select>${ic("chevThin")}</label>
            ${tool("aPlus", "Increase font size")}${tool("aMinus", "Decrease font size")}${drop("aCase", "Change case")}
            <span class="s4"></span>${tool("eraser", "Clear formatting")}
          </div>
          <div class="row">
            ${tool("bold", "Bold")}${tool("italic", "Italic")}${drop("under", "Underline")}${drop("strike", "Strikethrough")}
            ${drop("sup", "Superscript")}${drop("outl", "Text effects")}${drop("hilite", "Highlight")}${drop("fcolor", "Font color")}
            <span class="s4"></span>${tool("abox", "Character shading")}
          </div>
        </div>
        ${sep}
        <div class="rows">
          <div class="row">
            ${drop("bullets", "Bullets")}${drop("numbers", "Numbering")}<span class="s4"></span>${tool("outdent", "Decrease indent")}${tool("indent", "Increase indent")}
            ${drop("spread", "Character scaling")}${drop("ltr", "Text direction")}<span class="s4"></span>${tool("sort", "Sort")}${tool("cells", "Show marks")}
          </div>
          <div class="row">
            ${tool("al", "Align left", true)}${tool("ac", "Center")}${tool("ar", "Align right")}${tool("aj", "Justify")}${tool("dist", "Distribute")}
            ${drop("spacing", "Line spacing")}<span class="vline short"></span>${drop("fill", "Shading")}${drop("border", "Borders")}
          </div>
        </div>
        ${sep}
        <div class="gallery">
          <button class="style picked">Normal</button>
          <button class="style g1">Heading 1</button>
          <button class="style g2">Heading 2</button>
          <div class="scrolls">
            <button aria-label="Previous styles">${ic("gUp")}</button>
            <button aria-label="Next styles">${ic("gDown")}</button>
            <button aria-label="All styles">${ic("gMore")}</button>
          </div>
        </div>
        ${sep}
        ${big("w64", "find", "Find and", "Replace", true)}
        ${big("w54", "select", "Select", "", true)}
        ${sep}
        ${big("w82", "typeset", "Word", "Typesetting", true)}
        ${big("w56", "student", "Student", "Tools")}
        ${big("w84", "proof", "AI Proofreader")}
        ${big("w64", "settings", "Settings", "", true)}
      </section>

      <main class="work">
        <div class="canvas">
          <article class="page">
            <div class="marks"><span class="mark"></span><span class="mark r"></span></div>
            <div class="text">
              <h1>
                <span>Artificial Intelligence (AI) <u>Text Polishing</u>: <u>Transforming</u> the <u>Writing&nbsp;</u></span>
                <span><u>Landscape</u></span>
              </h1>
              ${BODY.map((p) => html`<p class=${p.length === 1 ? "heading" : "para"}>${p.map((l) => html`<span>${l}</span>`)}</p>`)}
            </div>
          </article>
        </div>
        <div class="vscroll">
          ${ic("splitV")}<span class="up">${ic("tUp")}</span>
          <span class="thumb"></span>
          <div class="pager">${ic("tDown")}${ic("tUp2")}${ic("tBox")}${ic("tDown2")}</div>
        </div>

        <aside class="panel">
          <div class="phead">
            <h2>All suggestions</h2><span class="beta">BETA</span><span class="count">8</span>
            <span class="push"></span>
            <span class="pacts">${tool("swap", "Switch")}${tool("feed", "Feedback")}${tool("xs", "Close panel")}</span>
          </div>
          <div class="cols">
            <ul class="list">
              <li class="card main">
                <div class="mhead">
                  <span class="dot blue"></span><span class="cat">Clarity • Capitalization</span>
                  <button class="detail">${ic("info")}Error Detail</button>
                </div>
                <p class="snip">Artificial Intelligence (AI) <del>Text Polishing </del><ins>&nbsp;text polishing</ins> :<br />Transforming the ...</p>
                <div class="acts"><button class="accept">Accept</button><button>Dismiss</button></div>
              </li>
              ${ITEMS.map(([c, a, b, t]) => html`<li>
                <button class="card item"><span class="dot ${c}"></span><span><span class="cat">${a} • ${b}</span><b>${t}</b></span></button>
              </li>`)}
            </ul>
            <div class="side">
              <button class="goals"><span class="gh">Set goals${ic("right")}</span>General, Inform, Knowledgeable, Neutral</button>
              <div class="rule"></div>
              <button class="all">All suggestions</button>
              ${CATS.map(([n, a, c]) => html`<button class="catbtn"><span>${n}<small>${a}</small></span>${ring(c)}</button>`)}
              <p class="checked">Pages checked: <b>3 / 3</b></p>
            </div>
          </div>
        </aside>

        <nav class="dock">
          ${tool("dash", "Collapse")}${tool("pen", "Edit")}${tool("cursor", "Select")}${tool("layers", "Selection pane")}${tool("lock", "Restrict")}
          ${tool("code", "Code")}${tool("sliders", "Properties")}${tool("history", "History")}${tool("tree", "Navigation")}${tool("help", "Help")}${tool("more", "More")}
        </nav>
      </main>

      <footer class="status">
        <span>Page: 1/3</span><span class="vline"></span><span>Words: 645</span><span class="vline"></span>
        <button class="spell">${ic("abc")}Spell Check<span class="arrow">${ic("tri")}</span></button>
        <span class="push"></span>
        <button class="view" aria-label="Backup">${ic("sHist")}</button>
        <button class="view" aria-label="Send to phone">${ic("sPhone")}</button>
        <span class="vline tight"></span>
        <button class="view on" aria-label="Page view">${ic("sPage")}</button>
        <button class="view" aria-label="Outline">${ic("sList")}</button>
        <button class="view" aria-label="Play">${ic("sPlay")}</button>
        <button class="view" aria-label="Web view">${ic("sGlobe")}</button>
        ${drop("sEye", "Eye protection")}
        <span class="vline wide"></span>
        <button class="zb" aria-label="Fit page">${ic("sFit")}</button>
        <span class="vgap"></span>
        <button class="zoomv">140%${ic("chev")}</button>
        <button class="zb" aria-label="Zoom out">${ic("sMinus")}</button>
        <input class="range" type="range" min="0" max="100" value="54" aria-label="Zoom" />
        <button class="zb" aria-label="Zoom in">${ic("sPlus")}</button>
        <button class="full" aria-label="Full screen">${ic("sFull")}</button>
      </footer>
    `;
  }
}
